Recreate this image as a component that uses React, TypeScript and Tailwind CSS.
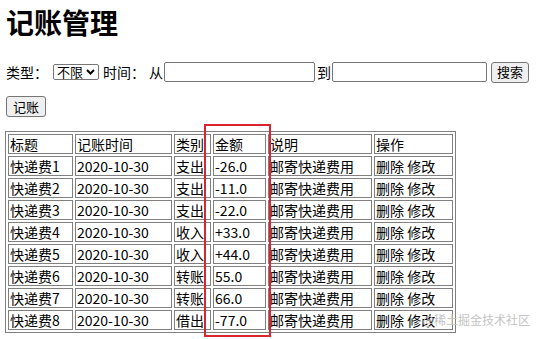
import React from "react";

const rows = [
  { title: "快递费1", date: "2020-10-30", kind: "支出", amount: "-26.0" },
  { title: "快递费2", date: "2020-10-30", kind: "支出", amount: "-11.0" },
  { title: "快递费3", date: "2020-10-30", kind: "支出", amount: "-22.0" },
  { title: "快递费4", date: "2020-10-30", kind: "收入", amount: "+33.0" },
  { title: "快递费5", date: "2020-10-30", kind: "收入", amount: "+44.0" },
  { title: "快递费6", date: "2020-10-30", kind: "转账", amount: "55.0" },
  { title: "快递费7", date: "2020-10-30", kind: "转账", amount: "66.0" },
  { title: "快递费8", date: "2020-10-30", kind: "借出", amount: "-77.0" },
];

const cell = "border border-[#808080] p-[1px] h-[20px] leading-[16px] whitespace-nowrap overflow-hidden align-middle";

export default function App() {
  return (
    <div className="relative w-[541px] h-[339px] overflow-hidden bg-white text-black text-[14px] font-['Noto_Sans_CJK_SC',sans-serif] px-[5px]">
      <h1 className="mt-[6px] ml-[1px] text-[28px] leading-[32px] font-bold">记账管理</h1>

      {/* search bar */}
      <div className="mt-[24px] ml-[1px] flex items-center h-[20px] leading-[16px]">
        <span>类型：</span>
        <span className="ml-[5px] inline-flex items-center justify-between h-[16px] w-[46px] border border-[#767676] rounded-[2px] pl-[3px] pr-[3px] text-[13px] leading-[14px]">
          不限
          <svg width="9" height="6" viewBox="0 0 9 6">
            <path d="M1 1 L4.5 4.5 L8 1" fill="none" stroke="#000" strokeWidth="2" />
          </svg>
        </span>
        <span className="ml-[4px]">时间：</span>
        <span className="ml-[4px]">从</span>
        <input className="ml-[1px] h-[20px] w-[151px] border border-[#767676] rounded-[2px]" />
        <span className="ml-[2px]">到</span>
        <input className="ml-[1px] h-[20px] w-[155px] border border-[#767676] rounded-[2px]" />
        <button className="ml-[4px] h-[21px] px-[5px] border border-[#767676] bg-[#efefef] rounded-[3px] text-[13px] leading-[16px]">
          搜索
        </button>
      </div>

      <button className="mt-[14px] ml-[1px] h-[21px] px-[6px] border border-[#767676] bg-[#efefef] rounded-[3px] text-[13px] leading-[16px]">
        记账
      </button>

      <table className="mt-[14px] table-fixed border-separate border-spacing-[2px] border border-[#808080] w-[451px]">
        <colgroup>
          <col className="w-[65px]" />
          <col className="w-[97px]" />
          <col className="w-[37px]" />
          <col className="w-[53px]" />
          <col className="w-[104px]" />
          <col className="w-[79px]" />
        </colgroup>
        <tbody>
          <tr>
            <td className={cell}>标题</td>
            <td className={cell}>记账时间</td>
            <td className={cell}>类别</td>
            <td className={cell}>金额</td>
            <td className={cell}>说明</td>
            <td className={cell}>操作</td>
          </tr>
          {rows.map((r) => (
            <tr key={r.title}>
              <td className={cell}>{r.title}</td>
              <td className={cell}>{r.date}</td>
              <td className={cell}>{r.kind}</td>
              <td className={cell}>{r.amount}</td>
              <td className={cell}>邮寄快递费用</td>
              <td className={cell}>删除 修改</td>
            </tr>
          ))}
        </tbody>
      </table>

      {/* highlight box around the amount column */}
      <div className="absolute left-[204px] top-[124px] w-[67px] h-[213px] border-2 border-[#d9252f] pointer-events-none" />

      {/* watermark */}
      <div className="absolute right-[11px] top-[312px] text-[12px] leading-[16px] text-[#c4c4c4] pointer-events-none">
        @稀土掘金技术社区
      </div>
    </div>
  );
}
